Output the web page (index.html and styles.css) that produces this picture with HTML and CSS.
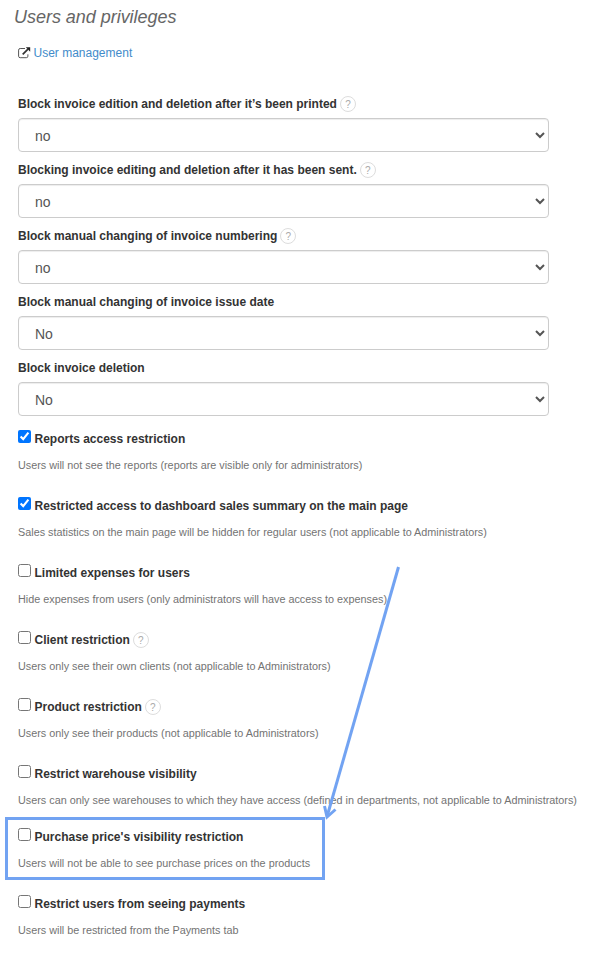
FILE: index.html
```
<!DOCTYPE html>
<html lang="en">
  <head>
    <meta charset="UTF-8" />
    <meta name="viewport" content="width=device-width, initial-scale=1.0" />
    <title>Users and privileges</title>
    <link rel="stylesheet" href="styles.css">
  </head>
  <body>
    <h2 class="section-title">Users and privileges</h2>
    <form class="settings">
      <div class="manage-link">
        <svg class="external-icon" width="13" height="12" viewBox="0 0 13 12">
          <path d="M7 1.500H2.200Q.6 1.500.6 3.100V9.200Q.6 10.700 2.200 10.700H8.300Q9.900 10.700 9.900 9.200V7.300" fill="none" stroke="#555" stroke-width="1" />
          <path d="M4.700 7.400L10 2.200" fill="none" stroke="#333" stroke-width="1.7" />
          <path d="M7.800.3H12.200V4.700Z" fill="#222" />
        </svg>
        <a href="#">User management</a>
      </div>

      <div class="form-group">
        <label for="block_printed">Block invoice edition and deletion after it’s been printed</label>
        <span class="hint">?</span>
        <select id="block_printed" class="form-control"><option>no</option><option>yes</option></select>
      </div>
      <div class="form-group">
        <label for="block_sent">Blocking invoice editing and deletion after it has been sent.</label>
        <span class="hint">?</span>
        <select id="block_sent" class="form-control"><option>no</option><option>yes</option></select>
      </div>
      <div class="form-group">
        <label for="block_number">Block manual changing of invoice numbering</label>
        <span class="hint">?</span>
        <select id="block_number" class="form-control"><option>no</option><option>yes</option></select>
      </div>
      <div class="form-group">
        <label for="block_date">Block manual changing of invoice issue date</label>
        <select id="block_date" class="form-control"><option>No</option><option>Yes</option></select>
      </div>
      <div class="form-group">
        <label for="block_delete">Block invoice deletion</label>
        <select id="block_delete" class="form-control"><option>No</option><option>Yes</option></select>
      </div>

      <div class="options">
        <div class="option">
          <div class="option-row">
            <input type="checkbox" id="reports" checked />
            <label for="reports">Reports access restriction</label>
          </div>
          <p class="help-block">Users will not see the reports (reports are visible only for administrators)</p>
        </div>
        <div class="option">
          <div class="option-row">
            <input type="checkbox" id="dashboard" checked />
            <label for="dashboard">Restricted access to dashboard sales summary on the main page</label>
          </div>
          <p class="help-block">Sales statistics on the main page will be hidden for regular users (not applicable to Administrators)</p>
        </div>
        <div class="option">
          <div class="option-row">
            <input type="checkbox" id="expenses" />
            <label for="expenses">Limited expenses for users</label>
          </div>
          <p class="help-block">Hide expenses from users (only administrators will have access to expenses)</p>
        </div>
        <div class="option">
          <div class="option-row">
            <input type="checkbox" id="clients" />
            <label for="clients">Client restriction</label>
            <span class="hint">?</span>
          </div>
          <p class="help-block">Users only see their own clients (not applicable to Administrators)</p>
        </div>
        <div class="option">
          <div class="option-row">
            <input type="checkbox" id="products" />
            <label for="products">Product restriction</label>
            <span class="hint">?</span>
          </div>
          <p class="help-block">Users only see their products (not applicable to Administrators)</p>
        </div>
        <div class="option option-tight">
          <div class="option-row">
            <input type="checkbox" id="warehouses" />
            <label for="warehouses">Restrict warehouse visibility</label>
          </div>
          <p class="help-block">Users can only see warehouses to which they have access (defined in departments, not applicable to Administrators)</p>
        </div>
        <div class="option option-marked">
          <div class="option-row">
            <input type="checkbox" id="purchase" />
            <label for="purchase">Purchase price's visibility restriction</label>
          </div>
          <p class="help-block">Users will not be able to see purchase prices on the products</p>
          <div class="marker"></div>
          <svg class="arrow" width="90" height="260" viewBox="0 0 90 260">
            <path d="M81.500 1L10.500 249" />
            <path d="M7.500 240L10 251L18.500 243.500" />
          </svg>
        </div>
        <div class="option">
          <div class="option-row">
            <input type="checkbox" id="payments" />
            <label for="payments">Restrict users from seeing payments</label>
          </div>
          <p class="help-block">Users will be restricted from the Payments tab</p>
        </div>
      </div>
    </form>
  </body>
</html>
```
FILE: styles.css
```
* {
  box-sizing: border-box;
}
body {
  margin: 0;
  font-family: Arial, "Liberation Sans", sans-serif;
  font-size: 12px;
  line-height: 20px;
  color: #333;
  background: #fff;
}
.section-title {
  margin: 0;
  padding: 5px 14px 0;
  font-size: 18px;
  font-weight: normal;
  font-style: italic;
  line-height: 24px;
  letter-spacing: -0.03px;
  color: #666;
}
.settings {
  padding: 14px 0 0 18px;
}
.manage-link {
  display: flex;
  align-items: center;
  gap: 2.5px;
  margin-bottom: 31px;
}
.manage-link a {
  color: #428bca;
  text-decoration: none;
}
.form-group {
  display: flex;
  flex-wrap: wrap;
  align-items: center;
  width: 531px;
  margin-bottom: 8px;
}
.form-group label,
.option-row label {
  font-weight: bold;
}
.form-group label {
  padding-bottom: 4px;
}
.hint {
  width: 16px;
  height: 16px;
  margin-left: 3px;
  border: 1px solid #ddd;
  border-radius: 50%;
  font-size: 10px;
  line-height: 15px;
  text-align: center;
  color: #aaa;
}
.form-group .hint {
  margin-bottom: 4px;
}
.form-control {
  width: 100%;
  height: 34px;
  padding: 8px 12px 6px;
  border: 1px solid #ccc;
  border-radius: 4px;
  background-color: #fff;
  box-shadow: inset 0 1px 1px rgba(0, 0, 0, 0.075);
  font-family: inherit;
  font-size: 14px;
  line-height: 20px;
  color: #555;
}
.options {
  padding-top: 4px;
}
.option {
  margin-bottom: 20px;
}
.option-tight {
  margin-bottom: 16px;
}
.option-row {
  display: flex;
  align-items: center;
  height: 20px;
  padding-top: 1px;
}
.option-row label,
.option-row .hint {
  margin-top: 1px;
}
.option-row input {
  width: 13px;
  height: 13px;
  margin: 0 3.5px 4px 0;
}
.help-block {
  margin: 7px 0 0;
  font-size: 10.82px;
  white-space: nowrap;
  color: #737373;
}
.option-marked {
  position: relative;
}
.marker {
  position: absolute;
  top: -9px;
  left: -13px;
  width: 320px;
  height: 63px;
  border: 3px solid #72a3f2;
}
.arrow {
  position: absolute;
  top: -260px;
  left: 299px;
  fill: none;
  stroke: #72a3f2;
  stroke-width: 3;
}
```
